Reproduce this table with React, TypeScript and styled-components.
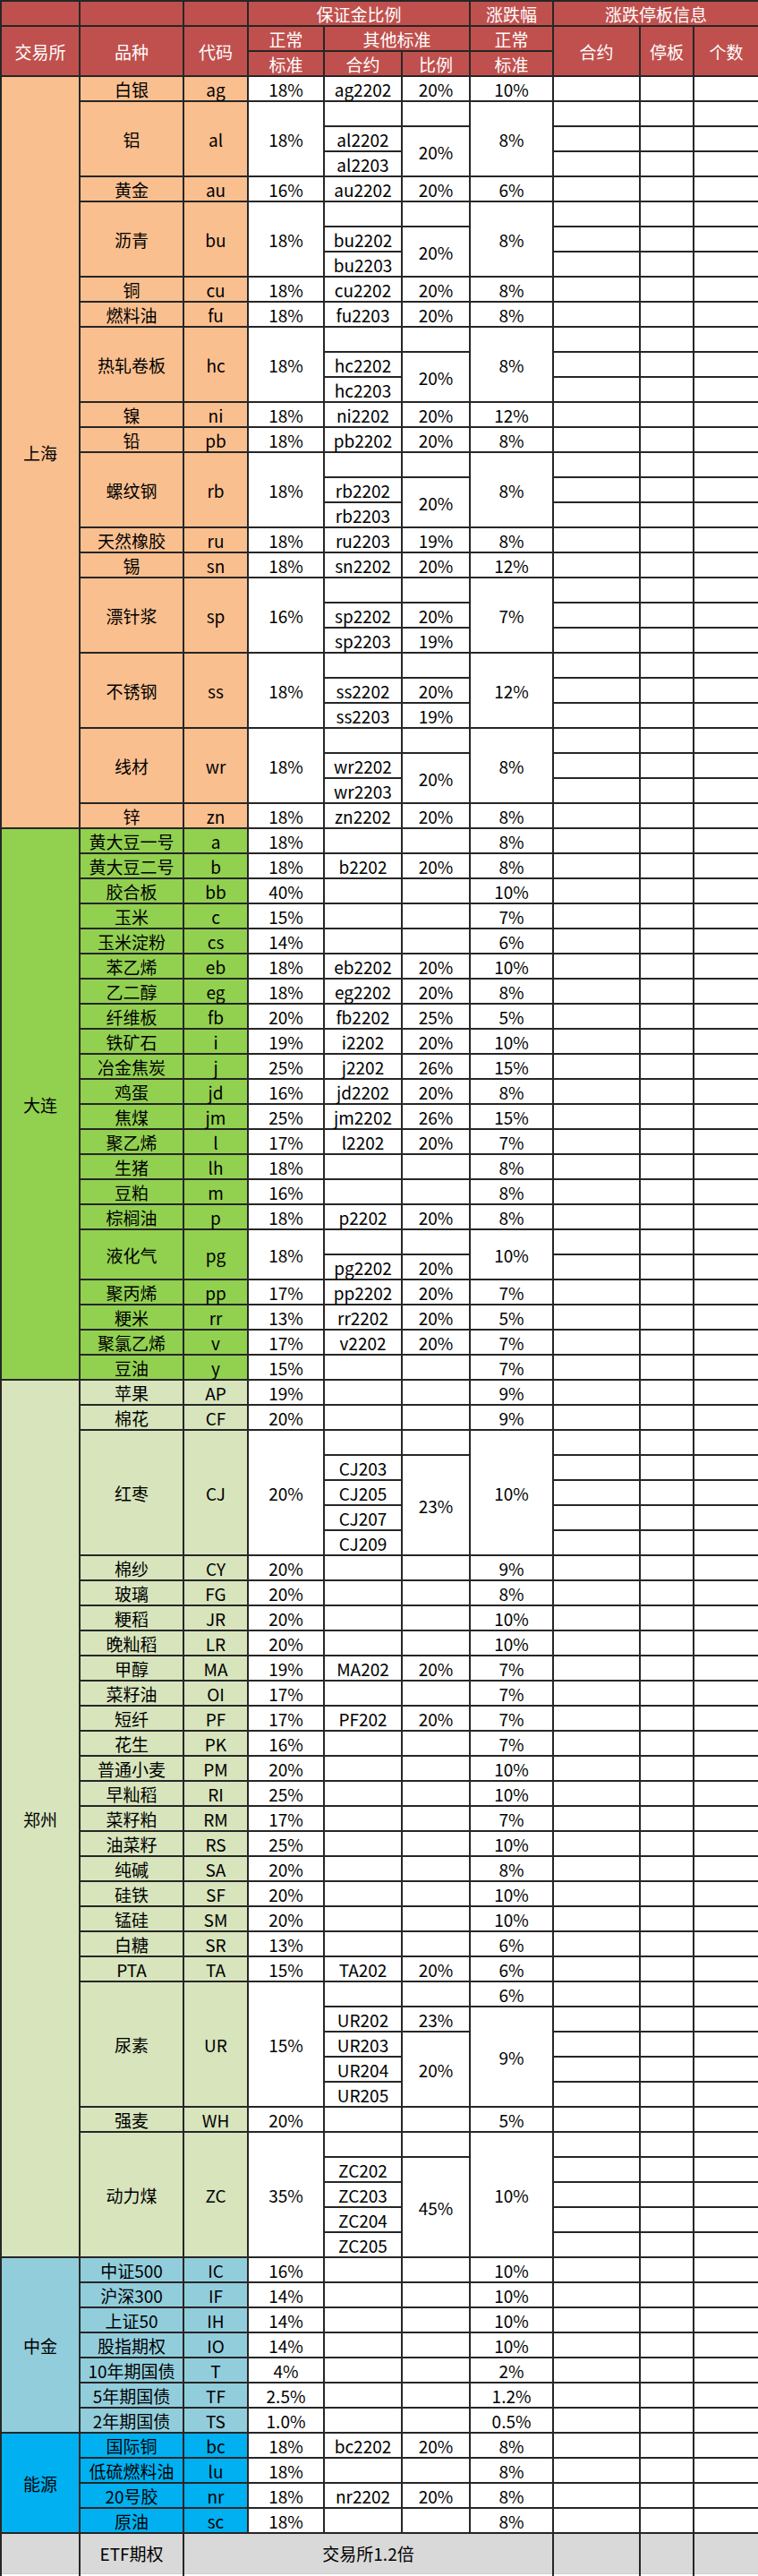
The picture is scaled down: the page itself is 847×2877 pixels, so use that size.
import React from "react";
import styled, { createGlobalStyle } from "styled-components";

const GlobalStyle = createGlobalStyle`
  body {
    margin: 0;
    background: #fff;
    font-family: "Noto Sans CJK SC", "Noto Sans", sans-serif;
  }
`;

const Sheet = styled.table`
  width: 847px;
  table-layout: fixed;
  border-collapse: collapse;
  font-size: 19px;
  line-height: 1;
  color: #000;
`;

const Row = styled.tr<{ $height?: number }>`
  height: ${(p) => p.$height ?? 28}px;
`;

const HeadCell = styled.th`
  padding: 0;
  border: 2px solid #262626;
  background: #c0504d;
  color: #fff;
  font-weight: 400;
  text-align: center;
  vertical-align: middle;
  white-space: nowrap;
`;

const Cell = styled.td<{ $bg?: string }>`
  padding: 0;
  border: 2px solid #262626;
  background: ${(p) => p.$bg ?? "#fff"};
  text-align: center;
  vertical-align: middle;
  white-space: nowrap;
`;

const EtfCell = styled(Cell)`
  background: #d9d9d9;
  border-bottom: 1px solid #d0d0d0;
`;

const TailCell = styled.td`
  padding: 0;
  border-left: 2px solid #262626;
  border-right: 2px solid #262626;
`;

type Span = [string, number];

type Product = {
  name: string;
  code: string;
  std: string;
  contracts: string[];
  ratio: Span[];
  limit: Span[];
};

type Exchange = {
  name: string;
  bg: string;
  products: Product[];
};

const one = (
  name: string,
  code: string,
  std: string,
  limit: string,
  contract = "",
  ratio = ""
): Product => ({
  name,
  code,
  std,
  contracts: [contract],
  ratio: [[ratio, 1]],
  limit: [[limit, 1]],
});

const multi = (
  name: string,
  code: string,
  std: string,
  contracts: string[],
  ratio: Span[],
  limit: Span[]
): Product => ({ name, code, std, contracts, ratio, limit });

const exchanges: Exchange[] = [
  {
    name: "上海",
    bg: "#fabf8f",
    products: [
      one("白银", "ag", "18%", "10%", "ag2202", "20%"),
      multi("铝", "al", "18%", ["", "al2202", "al2203"], [["", 1], ["20%", 2]], [["8%", 3]]),
      one("黄金", "au", "16%", "6%", "au2202", "20%"),
      multi("沥青", "bu", "18%", ["", "bu2202", "bu2203"], [["", 1], ["20%", 2]], [["8%", 3]]),
      one("铜", "cu", "18%", "8%", "cu2202", "20%"),
      one("燃料油", "fu", "18%", "8%", "fu2203", "20%"),
      multi("热轧卷板", "hc", "18%", ["", "hc2202", "hc2203"], [["", 1], ["20%", 2]], [["8%", 3]]),
      one("镍", "ni", "18%", "12%", "ni2202", "20%"),
      one("铅", "pb", "18%", "8%", "pb2202", "20%"),
      multi("螺纹钢", "rb", "18%", ["", "rb2202", "rb2203"], [["", 1], ["20%", 2]], [["8%", 3]]),
      one("天然橡胶", "ru", "18%", "8%", "ru2203", "19%"),
      one("锡", "sn", "18%", "12%", "sn2202", "20%"),
      multi("漂针浆", "sp", "16%", ["", "sp2202", "sp2203"], [["", 1], ["20%", 1], ["19%", 1]], [["7%", 3]]),
      multi("不锈钢", "ss", "18%", ["", "ss2202", "ss2203"], [["", 1], ["20%", 1], ["19%", 1]], [["12%", 3]]),
      multi("线材", "wr", "18%", ["", "wr2202", "wr2203"], [["", 1], ["20%", 2]], [["8%", 3]]),
      one("锌", "zn", "18%", "8%", "zn2202", "20%"),
    ],
  },
  {
    name: "大连",
    bg: "#92d050",
    products: [
      one("黄大豆一号", "a", "18%", "8%"),
      one("黄大豆二号", "b", "18%", "8%", "b2202", "20%"),
      one("胶合板", "bb", "40%", "10%"),
      one("玉米", "c", "15%", "7%"),
      one("玉米淀粉", "cs", "14%", "6%"),
      one("苯乙烯", "eb", "18%", "10%", "eb2202", "20%"),
      one("乙二醇", "eg", "18%", "8%", "eg2202", "20%"),
      one("纤维板", "fb", "20%", "5%", "fb2202", "25%"),
      one("铁矿石", "i", "19%", "10%", "i2202", "20%"),
      one("冶金焦炭", "j", "25%", "15%", "j2202", "26%"),
      one("鸡蛋", "jd", "16%", "8%", "jd2202", "20%"),
      one("焦煤", "jm", "25%", "15%", "jm2202", "26%"),
      one("聚乙烯", "l", "17%", "7%", "l2202", "20%"),
      one("生猪", "lh", "18%", "8%"),
      one("豆粕", "m", "16%", "8%"),
      one("棕榈油", "p", "18%", "8%", "p2202", "20%"),
      multi("液化气", "pg", "18%", ["", "pg2202"], [["", 1], ["20%", 1]], [["10%", 2]]),
      one("聚丙烯", "pp", "17%", "7%", "pp2202", "20%"),
      one("粳米", "rr", "13%", "5%", "rr2202", "20%"),
      one("聚氯乙烯", "v", "17%", "7%", "v2202", "20%"),
      one("豆油", "y", "15%", "7%"),
    ],
  },
  {
    name: "郑州",
    bg: "#d7e4bc",
    products: [
      one("苹果", "AP", "19%", "9%"),
      one("棉花", "CF", "20%", "9%"),
      multi("红枣", "CJ", "20%", ["", "CJ203", "CJ205", "CJ207", "CJ209"], [["", 1], ["23%", 4]], [["10%", 5]]),
      one("棉纱", "CY", "20%", "9%"),
      one("玻璃", "FG", "20%", "8%"),
      one("粳稻", "JR", "20%", "10%"),
      one("晚籼稻", "LR", "20%", "10%"),
      one("甲醇", "MA", "19%", "7%", "MA202", "20%"),
      one("菜籽油", "OI", "17%", "7%"),
      one("短纤", "PF", "17%", "7%", "PF202", "20%"),
      one("花生", "PK", "16%", "7%"),
      one("普通小麦", "PM", "20%", "10%"),
      one("早籼稻", "RI", "25%", "10%"),
      one("菜籽粕", "RM", "17%", "7%"),
      one("油菜籽", "RS", "25%", "10%"),
      one("纯碱", "SA", "20%", "8%"),
      one("硅铁", "SF", "20%", "10%"),
      one("锰硅", "SM", "20%", "10%"),
      one("白糖", "SR", "13%", "6%"),
      one("PTA", "TA", "15%", "6%", "TA202", "20%"),
      multi(
        "尿素",
        "UR",
        "15%",
        ["", "UR202", "UR203", "UR204", "UR205"],
        [["", 1], ["23%", 1], ["20%", 3]],
        [["6%", 1], ["9%", 4]]
      ),
      one("强麦", "WH", "20%", "5%"),
      multi("动力煤", "ZC", "35%", ["", "ZC202", "ZC203", "ZC204", "ZC205"], [["", 1], ["45%", 4]], [["10%", 5]]),
    ],
  },
  {
    name: "中金",
    bg: "#92cddc",
    products: [
      one("中证500", "IC", "16%", "10%"),
      one("沪深300", "IF", "14%", "10%"),
      one("上证50", "IH", "14%", "10%"),
      one("股指期权", "IO", "14%", "10%"),
      one("10年期国债", "T", "4%", "2%"),
      one("5年期国债", "TF", "2.5%", "1.2%"),
      one("2年期国债", "TS", "1.0%", "0.5%"),
    ],
  },
  {
    name: "能源",
    bg: "#00b0f0",
    products: [
      one("国际铜", "bc", "18%", "8%", "bc2202", "20%"),
      one("低硫燃料油", "lu", "18%", "8%"),
      one("20号胶", "nr", "18%", "8%", "nr2202", "20%"),
      one("原油", "sc", "18%", "8%"),
    ],
  },
];

const widths = [88, 116, 72, 85, 87, 76, 93, 97, 60, 73];

// cell that begins at a given sub-row, or null when a rowspan above covers it
const startAt = (list: Span[], row: number): Span | null => {
  let r = 0;
  for (const s of list) {
    if (r === row) return s;
    r += s[1];
  }
  return null;
};

const ExchangeRows = ({ ex }: { ex: Exchange }) => {
  const total = ex.products.reduce((sum, p) => sum + p.contracts.length, 0);
  let first = true;
  return (
    <>
      {ex.products.flatMap((p) =>
        p.contracts.map((contract, i) => {
          const n = p.contracts.length;
          const ratio = startAt(p.ratio, i);
          const limit = startAt(p.limit, i);
          const showExchange = first;
          first = false;
          return (
            <Row key={`${p.code}-${i}`}>
              {showExchange && (
                <Cell rowSpan={total} $bg={ex.bg}>
                  {ex.name}
                </Cell>
              )}
              {i === 0 && (
                <>
                  <Cell rowSpan={n} $bg={ex.bg}>
                    {p.name}
                  </Cell>
                  <Cell rowSpan={n} $bg={ex.bg}>
                    {p.code}
                  </Cell>
                  <Cell rowSpan={n}>{p.std}</Cell>
                </>
              )}
              <Cell>{contract}</Cell>
              {ratio && <Cell rowSpan={ratio[1]}>{ratio[0]}</Cell>}
              {limit && <Cell rowSpan={limit[1]}>{limit[0]}</Cell>}
              <Cell />
              <Cell />
              <Cell />
            </Row>
          );
        })
      )}
    </>
  );
};

const App = () => (
  <>
    <GlobalStyle />
    <Sheet>
      <colgroup>
        {widths.map((w, i) => (
          <col key={i} style={{ width: w }} />
        ))}
      </colgroup>
      <thead>
        <Row>
          <HeadCell />
          <HeadCell />
          <HeadCell />
          <HeadCell colSpan={3}>保证金比例</HeadCell>
          <HeadCell>涨跌幅</HeadCell>
          <HeadCell colSpan={3}>涨跌停板信息</HeadCell>
        </Row>
        <Row>
          <HeadCell rowSpan={2}>交易所</HeadCell>
          <HeadCell rowSpan={2}>品种</HeadCell>
          <HeadCell rowSpan={2}>代码</HeadCell>
          <HeadCell>正常</HeadCell>
          <HeadCell colSpan={2}>其他标准</HeadCell>
          <HeadCell>正常</HeadCell>
          <HeadCell rowSpan={2}>合约</HeadCell>
          <HeadCell rowSpan={2}>停板</HeadCell>
          <HeadCell rowSpan={2}>个数</HeadCell>
        </Row>
        <Row>
          <HeadCell>标准</HeadCell>
          <HeadCell>合约</HeadCell>
          <HeadCell>比例</HeadCell>
          <HeadCell>标准</HeadCell>
        </Row>
      </thead>
      <tbody>
        {exchanges.map((ex) => (
          <ExchangeRows key={ex.name} ex={ex} />
        ))}
        <Row $height={45}>
          <EtfCell />
          <EtfCell>ETF期权</EtfCell>
          <EtfCell colSpan={5}>交易所1.2倍</EtfCell>
          <EtfCell />
          <EtfCell />
          <EtfCell />
        </Row>
        <Row $height={5}>
          <TailCell />
          <TailCell />
          <TailCell colSpan={5} />
          <TailCell />
          <TailCell />
          <TailCell />
        </Row>
      </tbody>
    </Sheet>
  </>
);

export default App;
